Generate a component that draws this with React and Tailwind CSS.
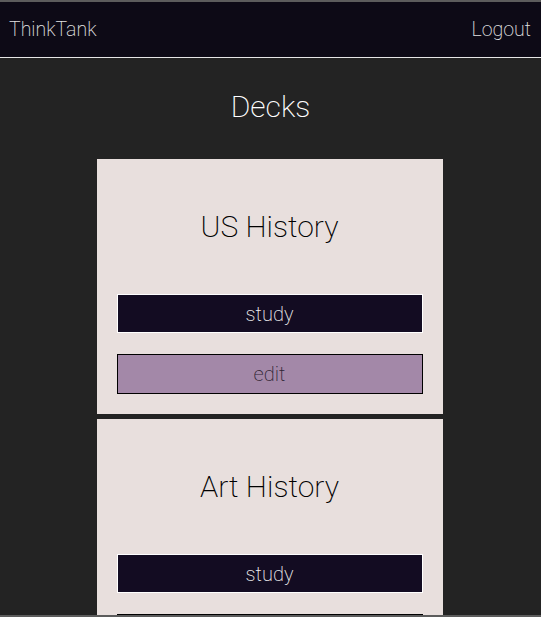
const decks = ['US History', 'Art History', 'Biology']

function DeckCard({ name }) {
  return (
    <div className="w-[346px] -translate-x-px bg-[#e8dfdd] px-5 pb-5 pt-[50px] mb-[5px]">
      <h2 className="text-center text-[30px] leading-[36px] font-extralight text-black">{name}</h2>
      <button className="mt-[49px] block w-full h-[39px] bg-[#130c22] border border-white text-[20px] font-extralight text-[#eeeeee]">
        study
      </button>
      <button className="mt-[21px] block w-full h-[40px] bg-[#a388a8] border border-black text-[20px] font-extralight text-[#2e2433]">
        edit
      </button>
    </div>
  )
}

export default function App() {
  return (
    <div
      className="h-[617px] overflow-hidden bg-[#232323] border-t-2 border-b-2 border-[#5c5c5c] flex flex-col"
      style={{ fontFamily: 'Roboto, "Noto Sans", sans-serif' }}
    >
      <nav className="h-[56px] shrink-0 bg-[#0d0a16] border-b border-[#e6e6e6] flex items-center justify-between pl-[9px] pr-[10px]">
        <span className="text-[19.5px] font-extralight text-[#e4e4e4]">ThinkTank</span>
        <span className="text-[19.5px] font-extralight text-[#e4e4e4]">Logout</span>
      </nav>
      <div className="flex-1 overflow-hidden flex flex-col items-center">
        <h1 className="mt-[29px] mb-[32px] text-[30px] leading-[40px] font-extralight text-white">Decks</h1>
        {decks.map(d => (
          <DeckCard key={d} name={d} />
        ))}
      </div>
    </div>
  )
}
